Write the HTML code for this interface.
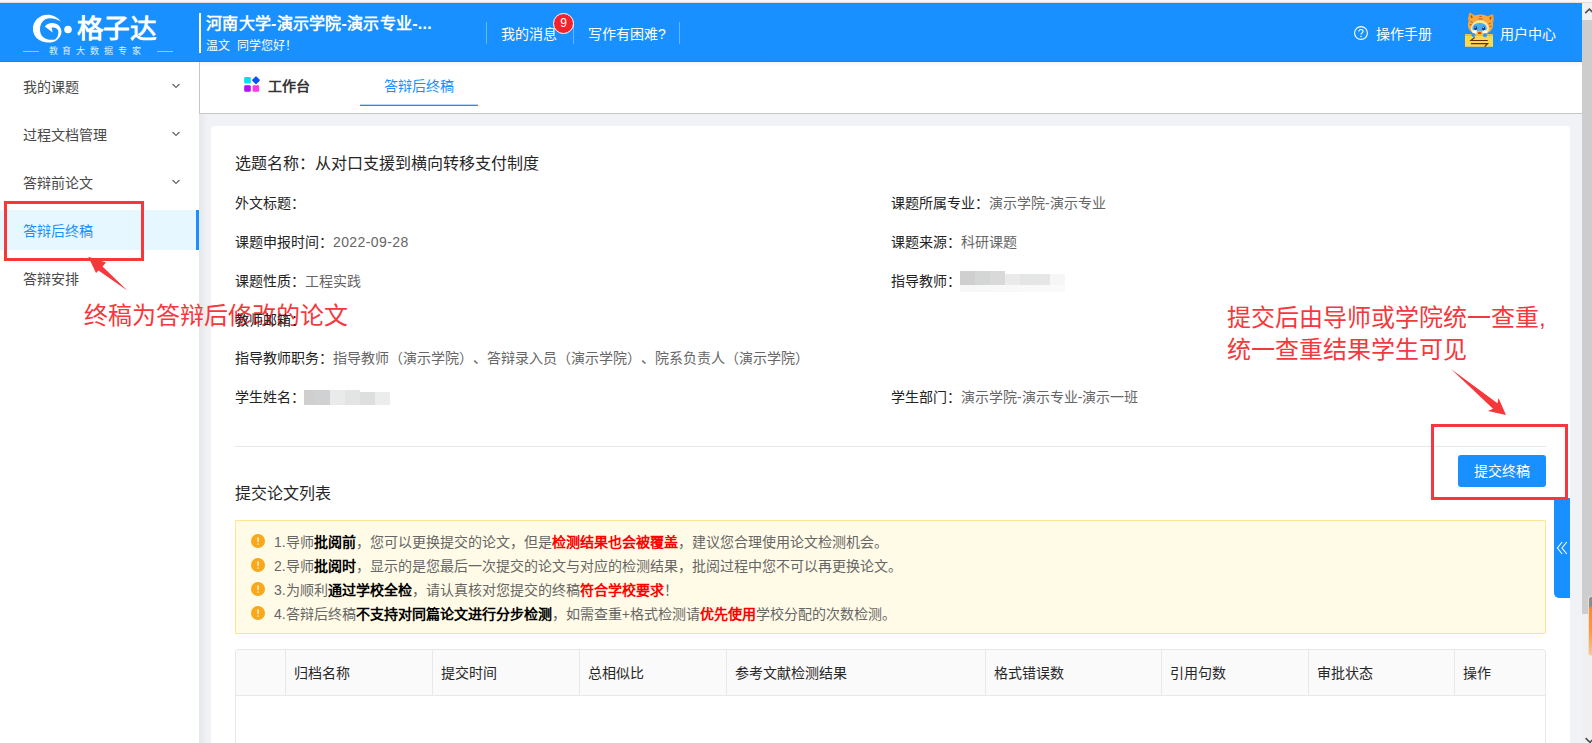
<!DOCTYPE html>
<html lang="zh-CN">
<head>
<meta charset="utf-8">
<title>答辩后终稿</title>
<style>
*{box-sizing:border-box;margin:0;padding:0}
html,body{width:1592px;height:743px;overflow:hidden}
body{position:relative;background:#f0f2f5;font-family:"Liberation Sans",sans-serif;font-size:14px;color:#333;line-height:1;text-spacing-trim:space-all;font-kerning:none}
.abs{position:absolute;white-space:nowrap}
#topstrip{left:0;top:0;width:1592px;height:3px;background:#f7f7f9;border-bottom:1px solid #e4ddd6}
#header{left:0;top:3px;width:1582px;height:59px;background:#1890ff;border-bottom:1px solid #0f86f5}
#header .bar{left:199px;top:10px;width:2px;height:40px;background:#fff}
#header .t1{left:206px;top:13px;font-size:16px;font-weight:bold;color:#fff;letter-spacing:.25px}
#header .t2{left:206px;top:37px;font-size:12px;color:#fff}
#header .sep{top:19px;width:1px;height:22px;background:rgba(255,255,255,.35)}
#header .nav{top:24px;font-size:14px;color:#fff}
#badge{left:553px;top:10px;width:21px;height:21px;border-radius:50%;background:#f5222d;border:1px solid #fff;color:#fff;font-size:12px;text-align:center;line-height:19px}
#sidebar{left:0;top:62px;width:199px;height:681px;background:#fff}
#sshadow{left:199px;top:114px;width:9px;height:629px;background:linear-gradient(90deg,#e5e7eb,#f0f2f5)}
.mi{left:0;width:199px;height:40px;line-height:40px;padding-left:23px;font-size:14px;color:#484848}
.mi.act{background:#e6f7ff;color:#1890ff;border-right:3px solid #1890ff}
.chev{left:171px;width:10px;height:10px}
#tabbar{left:199px;top:62px;width:1383px;height:52px;background:linear-gradient(180deg,#f3f4f5 0,#fff 5px);border-bottom:1px solid #c6c6c6;border-left:1px solid #c6c6c6}
#panel{left:211px;top:126px;width:1359px;height:617px;background:#fff;border-radius:4px 4px 0 0}
.lab{font-size:14px;color:#222}
.row{height:20px;line-height:20px}
.blur{background:linear-gradient(90deg,#cfcfcf 0%,#dedede 25%,#e4e4e4 55%,#ececec 80%,#f6f6f6 100%);filter:blur(1.5px)}
.val{color:#666}
.red{color:#f5222d}
.ann{font-size:24px;color:#f6373c;line-height:32px}
#alert{left:235px;top:520px;width:1311px;height:114px;background:#fffbe6;border:1px solid #ffe58f;border-radius:1px}
.al{left:38px;font-size:14px;color:#666;height:24px;line-height:24px}
.al b{color:#000}
.al b.r{color:#f00}
.ic{left:15px;width:14px;height:14px;border-radius:50%;background:#faad14;color:#fff;font-size:11px;font-weight:bold;text-align:center;line-height:14px}
#table{left:235px;top:649px;width:1311px;height:94px;border:1px solid #e8e8e8;border-bottom:none;border-radius:4px 4px 0 0;background:#fff}
#thead{left:0;top:0;width:1309px;height:46px;background:#fafafa;border-bottom:1px solid #e8e8e8;border-radius:4px 4px 0 0}
.th{top:0;height:45px;line-height:46px;padding-left:8px;font-size:14px;color:#262626;border-left:1px solid #e8e8e8}
#sbar{left:1582px;top:3px;width:10px;height:740px;background:#f0f0f0}
</style>
</head>
<body>
<div id="topstrip" class="abs"></div>

<div id="header" class="abs">
  <div class="abs bar"></div>
  <div class="abs t1">河南大学-演示学院-演示专业-...</div>
  <div class="abs t2">温文&nbsp; 同学您好！</div>
  <div class="abs sep" style="left:486px"></div>
  <div class="abs nav" style="left:501px">我的消息</div>
  <div id="badge" class="abs">9</div>
  <div class="abs sep" style="left:573px"></div>
  <div class="abs nav" style="left:588px">写作有困难?</div>
  <div class="abs sep" style="left:679px"></div>
  <div class="abs nav" style="left:1376px">操作手册</div>
  <div class="abs nav" style="left:1500px">用户中心</div>
</div>

<div id="sidebar" class="abs">
  <div class="abs mi" style="top:5px">我的课题</div>
  <div class="abs mi" style="top:53px">过程文档管理</div>
  <div class="abs mi" style="top:101px">答辩前论文</div>
  <div class="abs mi act" style="top:148px;line-height:42px">答辩后终稿</div>
  <div class="abs mi" style="top:197px">答辩安排</div>
  <svg class="abs chev" style="top:19px" viewBox="0 0 10 10"><path d="M1.5 3L5 6.5L8.5 3" fill="none" stroke="#666" stroke-width="1.2"/></svg>
  <svg class="abs chev" style="top:67px" viewBox="0 0 10 10"><path d="M1.5 3L5 6.5L8.5 3" fill="none" stroke="#666" stroke-width="1.2"/></svg>
  <svg class="abs chev" style="top:115px" viewBox="0 0 10 10"><path d="M1.5 3L5 6.5L8.5 3" fill="none" stroke="#666" stroke-width="1.2"/></svg>
</div>

<div id="sshadow" class="abs"></div>
<div id="tabbar" class="abs">
  <svg class="abs" style="left:43px;top:13px" width="18" height="18" viewBox="0 0 18 18">
    <rect x="1.2" y="1.9" width="6.6" height="6.6" rx="1.3" fill="#00e0f5"/>
    <rect x="10" y="2.2" width="6" height="6" rx="1" fill="#0a50ff" transform="rotate(45 13 5.2)"/>
    <rect x="1.2" y="10.2" width="6.6" height="6.6" rx="1.3" fill="#b010f5"/>
    <rect x="9.6" y="10.2" width="6.6" height="6.6" rx="1.3" fill="#fb38e6"/>
  </svg>
  <div class="abs" style="left:68px;top:17px;font-size:14px;font-weight:bold;color:#333">工作台</div>
  <div class="abs" style="left:184px;top:17px;font-size:14px;color:#1890ff">答辩后终稿</div>
  <div class="abs" style="left:160px;top:42px;width:118px;height:2px;background:linear-gradient(180deg,rgba(24,144,255,.35) 0,rgba(24,144,255,.35) 1px,#1890ff 1px,#1890ff 2px)"></div>
</div>

<div id="panel" class="abs"></div>

<div class="abs" style="left:235px;top:152px;height:24px;line-height:24px;font-size:16px;color:#262626">选题名称：从对口支援到横向转移支付制度</div>

<div class="abs lab row" style="left:235px;top:193px">外文标题：</div>
<div class="abs lab row" style="left:235px;top:232px">课题申报时间：<span class="val" style="letter-spacing:.4px">2022-09-28</span></div>
<div class="abs lab row" style="left:235px;top:271px">课题性质：<span class="val">工程实践</span></div>
<div class="abs lab row" style="left:235px;top:310px;z-index:5">教师邮箱：</div>
<div class="abs lab row" style="left:235px;top:348px">指导教师职务：<span class="val">指导教师（演示学院）、答辩录入员（演示学院）、院系负责人（演示学院）</span></div>
<div class="abs lab row" style="left:235px;top:387px">学生姓名：</div>
<div class="abs" style="left:304px;top:390px;width:86px;height:15px;background:linear-gradient(90deg,#d0cfce 0,#d0cfce 11px,#d0d1d3 11px,#d0d1d3 26px,#ebeaea 26px,#ebeaea 41px,#e3e4e4 41px,#e3e4e4 56px,#dedede 56px,#dedede 71px,#ebecec 71px)"></div><div class="abs" style="left:360px;top:390px;width:30px;height:2px;background:#fff"></div>

<div class="abs lab row" style="left:891px;top:193px">课题所属专业：<span class="val">演示学院-演示专业</span></div>
<div class="abs lab row" style="left:891px;top:232px">课题来源：<span class="val">科研课题</span></div>
<div class="abs lab row" style="left:891px;top:271px">指导教师：</div>
<div class="abs" style="left:960px;top:271px;width:105px;height:14px;background:linear-gradient(90deg,#cfcfcf 0,#cfcfcf 15px,#d4d5d5 15px,#d4d5d5 30px,#d9d9d9 30px,#d9d9d9 45px,#ebeaea 45px,#ebeaea 60px,#e4e5e5 60px,#e4e5e5 75px,#e6e6e6 75px,#e6e6e6 90px,#f6f6f6 90px)"></div><div class="abs" style="left:1005px;top:271px;width:60px;height:3px;background:#fff"></div><div class="abs" style="left:960px;top:285px;width:105px;height:7px;background:linear-gradient(90deg,#f7f7f7,#fafafa)"></div>
<div class="abs lab row" style="left:891px;top:387px">学生部门：<span class="val">演示学院-演示专业-演示一班</span></div>

<div class="abs" style="left:235px;top:446px;width:1311px;height:1px;background:#e8e8e8"></div>
<div class="abs" style="left:1458px;top:455px;width:88px;height:32px;border-radius:3px;background:#1890ff;color:#fff;font-size:14px;line-height:33px;text-align:center">提交终稿</div>

<div class="abs" style="left:235px;top:482px;height:24px;line-height:24px;font-size:16px;color:#262626">提交论文列表</div>

<div id="alert" class="abs">
  <svg class="abs" style="left:15px;top:13px" width="14" height="14" viewBox="0 0 14 14"><circle cx="7" cy="7" r="7" fill="#faa81a"/><rect x="6.3" y="3.2" width="1.5" height="4.9" rx=".5" fill="#fff" opacity=".8"/><rect x="6.3" y="9.3" width="1.5" height="1.5" rx=".5" fill="#fff" opacity=".8"/></svg>
  <svg class="abs" style="left:15px;top:37px" width="14" height="14" viewBox="0 0 14 14"><circle cx="7" cy="7" r="7" fill="#faa81a"/><rect x="6.3" y="3.2" width="1.5" height="4.9" rx=".5" fill="#fff" opacity=".8"/><rect x="6.3" y="9.3" width="1.5" height="1.5" rx=".5" fill="#fff" opacity=".8"/></svg>
  <svg class="abs" style="left:15px;top:61px" width="14" height="14" viewBox="0 0 14 14"><circle cx="7" cy="7" r="7" fill="#faa81a"/><rect x="6.3" y="3.2" width="1.5" height="4.9" rx=".5" fill="#fff" opacity=".8"/><rect x="6.3" y="9.3" width="1.5" height="1.5" rx=".5" fill="#fff" opacity=".8"/></svg>
  <svg class="abs" style="left:15px;top:85px" width="14" height="14" viewBox="0 0 14 14"><circle cx="7" cy="7" r="7" fill="#faa81a"/><rect x="6.3" y="3.2" width="1.5" height="4.9" rx=".5" fill="#fff" opacity=".8"/><rect x="6.3" y="9.3" width="1.5" height="1.5" rx=".5" fill="#fff" opacity=".8"/></svg>
  <div class="abs al" style="top:9px">1.导师<b>批阅前</b>，您可以更换提交的论文，但是<b class="r">检测结果也会被覆盖</b>，建议您合理使用论文检测机会。</div>
  <div class="abs al" style="top:33px">2.导师<b>批阅时</b>，显示的是您最后一次提交的论文与对应的检测结果，批阅过程中您不可以再更换论文。</div>
  <div class="abs al" style="top:57px">3.为顺利<b>通过学校全检</b>，请认真核对您提交的终稿<b class="r">符合学校要求</b>！</div>
  <div class="abs al" style="top:81px">4.答辩后终稿<b>不支持对同篇论文进行分步检测</b>，如需查重+格式检测请<b class="r">优先使用</b>学校分配的次数检测。</div>
</div>

<div id="table" class="abs">
  <div id="thead" class="abs"></div>
  <div class="abs th" style="left:49px;width:147px">归档名称</div>
  <div class="abs th" style="left:196px;width:147px">提交时间</div>
  <div class="abs th" style="left:343px;width:147px">总相似比</div>
  <div class="abs th" style="left:490px;width:259px">参考文献检测结果</div>
  <div class="abs th" style="left:749px;width:176px">格式错误数</div>
  <div class="abs th" style="left:925px;width:147px">引用句数</div>
  <div class="abs th" style="left:1072px;width:146px">审批状态</div>
  <div class="abs th" style="left:1218px;width:90px">操作</div>
</div>

<!-- annotations -->
<div class="abs" style="left:4px;top:201px;width:140px;height:60px;border:3px solid #f6373c"></div>
<div class="abs ann" style="left:84px;top:300px">终稿为答辩后修改的论文</div>

<div class="abs ann" style="left:1227px;top:302px">提交后由导师或学院统一查重,<br>统一查重结果学生可见</div>
<div class="abs" style="left:1431px;top:424px;width:137px;height:76px;border:3px solid #f6373c;z-index:6"></div>

<div class="abs" style="left:1554px;top:498px;width:16px;height:100px;background:#1890ff;border-radius:2px 0 0 5px"><svg class="abs" style="left:2px;top:43px" width="12" height="14" viewBox="0 0 12 14"><path d="M6.2 1L1.4 7L6.2 13M10.8 1L6 7L10.8 13" fill="none" stroke="#fff" stroke-width="1.1"/></svg></div>

<svg id="ov" class="abs" style="left:0;top:0" width="1592" height="743" viewBox="0 0 1592 743">
  <!-- logo -->
  <path d="M60.9 21.6C57.5 17 52.5 14.8 47.6 14.8C39.5 14.8 32.9 21 32.9 28.9C32.9 36.5 39.5 42.5 48.8 42.5C52 42.5 54.8 41.7 56.7 40.2C59.8 37.8 61.5 35 61.5 31.8C61.5 27 57.5 23 52.1 23C49 23 46.5 24.5 44.8 26.4L52.7 32.6L51.6 27.5C55.5 27.5 58.4 29 58.4 31.8C58.4 35 57.3 37.8 55.5 39.2C53.8 39.9 51.5 39.9 49.3 39.7C43.5 39 40 35 40 29.5C40 23 44 18.2 49.9 18.2C53.5 18.2 56.5 19 60.9 21.6Z" fill="#fff"/>
  <circle cx="68" cy="29.5" r="3.8" fill="#fff"/>
  <text x="76.5" y="38.2" font-size="26" font-weight="900" fill="#fff" font-family="Liberation Sans, sans-serif" textLength="80" lengthAdjust="spacingAndGlyphs">格子达</text>
  <rect x="23" y="51" width="16" height="1" fill="#fff" opacity=".5"/>
  <rect x="157" y="51" width="16" height="1" fill="#fff" opacity=".5"/>
  <text x="48.5" y="54.3" font-size="9" fill="#fff" opacity=".85" font-family="Liberation Sans, sans-serif" textLength="92" lengthAdjust="spacing">教育大数据专家</text>
  <!-- help icon -->
  <circle cx="1361" cy="33" r="6.4" fill="none" stroke="#fff" stroke-width="1.1"/>
  <path d="M1358.9 31.4C1358.9 28.9 1363.1 28.9 1363.1 31.3C1363.1 32.9 1361 32.9 1361 34.6" fill="none" stroke="#fff" stroke-width="1.1"/>
  <circle cx="1361" cy="36.4" r=".75" fill="#fff"/>
  <!-- avatar -->
  <path d="M1468.6 19.5L1470 13.3L1475 16.5Z" fill="#f9a02c" stroke="#f9a02c" stroke-width="1.5" stroke-linejoin="round"/>
  <path d="M1493 21L1492.6 15L1487.6 17.2Z" fill="#f9a02c" stroke="#f9a02c" stroke-width="1.5" stroke-linejoin="round"/>
  <ellipse cx="1480.5" cy="24.8" rx="12.6" ry="10.2" fill="#f9a83a"/>
  <path d="M1471.2 15.5L1472 18M1490.8 17L1490 19.5" stroke="#a8500f" stroke-width="1.4"/>
  <path d="M1479.4 16.5h2.4M1478.6 18.8h4M1470.5 21.5l2.4 1M1469.5 24.5l2.4.6M1490.8 23l-2.3 1M1491.6 26l-2.3.6" stroke="#c96a14" stroke-width="1.2"/>
  <ellipse cx="1480" cy="28.3" rx="9.2" ry="8" fill="#fde7a6"/>
  <ellipse cx="1479.6" cy="28.3" rx="7.2" ry="5.6" fill="#46adf6"/>
  <ellipse cx="1475" cy="31.8" rx="2.6" ry="1.8" fill="#fff"/>
  <ellipse cx="1484.4" cy="31.8" rx="2.6" ry="1.8" fill="#fff"/>
  <ellipse cx="1475.6" cy="28" rx="1.6" ry="2" fill="#17327e"/>
  <ellipse cx="1483.6" cy="28.4" rx="1.6" ry="2" fill="#17327e"/>
  <circle cx="1475.2" cy="27.2" r=".6" fill="#fff"/><circle cx="1483.2" cy="27.6" r=".6" fill="#fff"/>
  <ellipse cx="1479.6" cy="31.9" rx="3.2" ry="1.2" fill="#ffb400"/>
  <ellipse cx="1479.6" cy="33.2" rx="1.7" ry="1.1" fill="#e8301c"/>
  <rect x="1465" y="34.2" width="28" height="12.6" fill="#ffd84d"/>
  <rect x="1465" y="34.2" width="28" height="1.8" fill="#f7b93b"/>
  <circle cx="1473.4" cy="35" r="2.1" fill="#2f9cf2"/>
  <circle cx="1485" cy="35.2" r="2.1" fill="#2f9cf2"/>
  <path d="M1474.7 37.4L1471 40.5H1487.8M1471 43.6H1487.6L1484.6 46.6" fill="none" stroke="#6b2a0a" stroke-width="1.2"/>
  <!-- red arrows -->
  <path d="M88.3 256.8L106 262.6L102.5 266.5L127.6 290.8L98.5 270.5L96 273Z" fill="#f6373c"/>
  <path d="M1451 369L1497.5 403.3L1498.5 398L1506 415L1488 411L1493 408.7Z" fill="#f6373c"/>
</svg>

<div id="sbar" class="abs">
  <div class="abs" style="left:0;top:17px;width:10px;height:594px;background:#cdcdcd"></div>
  <svg class="abs" style="left:0;top:0" width="10" height="17" viewBox="0 0 10 17"><path d="M3.2 10.2L7.4 6.2L11 9.6" fill="none" stroke="#505050" stroke-width="1.6"/></svg>
  <svg class="abs" style="left:0;top:730px" width="10" height="10" viewBox="0 0 10 10"><path d="M3.6 5.2L8 9.4L12 5.2" fill="none" stroke="#505050" stroke-width="1.6"/></svg>
  <div class="abs" style="left:6px;top:593px;width:6px;height:60px;border-radius:3px 0 0 3px;background:linear-gradient(180deg,#8c8c8c 0,#8c8c8c 9px,#ff8a2b 11px,#ff9a3e 60%,#ffc68a 100%);border:1px solid #e0e0e0;border-right:none"></div>
</div>
</body>
</html>
